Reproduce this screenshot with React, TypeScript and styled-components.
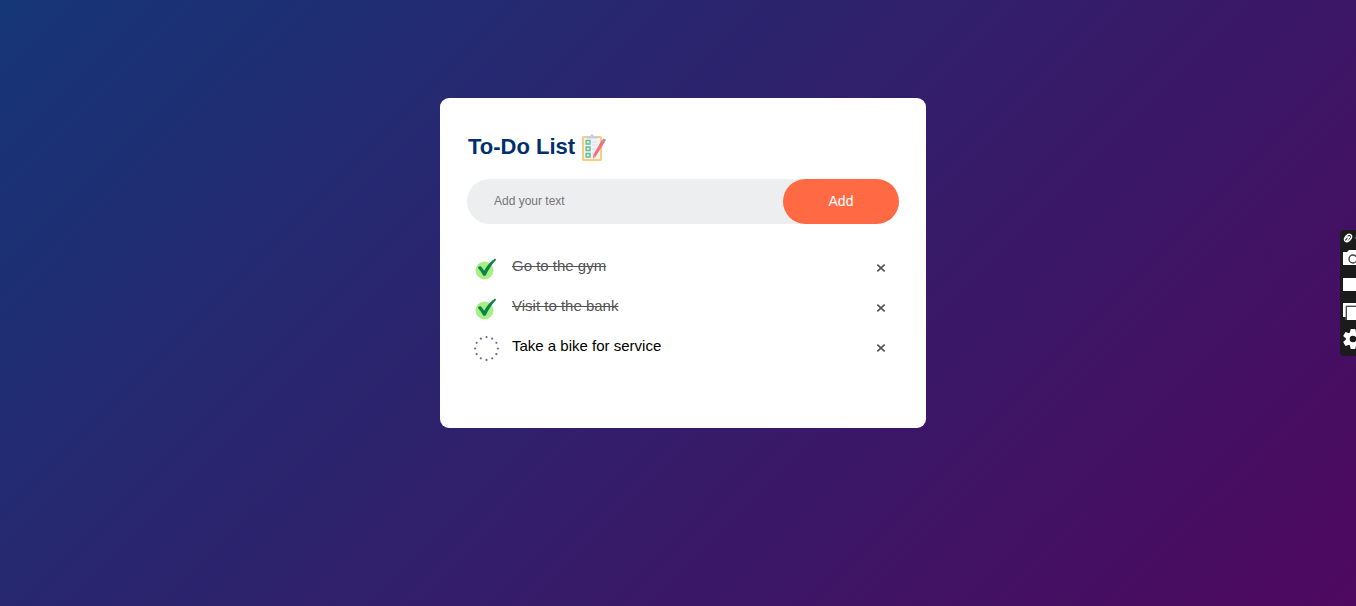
import React, { useState } from "react";
import styled, { createGlobalStyle } from "styled-components";

const GlobalStyle = createGlobalStyle`
  * { box-sizing: border-box; margin: 0; padding: 0; }
  body {
    font-family: "Liberation Sans", Arial, sans-serif;
    background: #2f216a;
  }
`;

const Page = styled.main`
  min-height: 100vh;
  padding: 98px 0 20px 10px;
  overflow: hidden;
  background: linear-gradient(135deg, #153677, #4e085f);
`;

const Card = styled.section`
  width: 100%;
  max-width: 486px;
  margin: 0 auto;
  padding: 36px 27px 60px;
  border-radius: 9px;
  background: #fff;
`;

const Title = styled.h1`
  display: flex;
  align-items: center;
  gap: 5px;
  height: 26px;
  margin-bottom: 19px;
  padding-left: 1px;
  color: #002f70;
  font-size: 22px;
  line-height: 26px;
`;

const AddForm = styled.form`
  display: flex;
  height: 45px;
  margin-bottom: 24px;
  border-radius: 27px;
  background: #edeef0;
`;

const TextBox = styled.input`
  flex: 1;
  min-width: 0;
  padding: 0 9px 2px 27px;
  border: 0;
  outline: 0;
  background: transparent;
  font: 12px "Liberation Sans", Arial, sans-serif;
  &::placeholder { color: #757575; }
`;

const AddButton = styled.button`
  width: 116px;
  padding-bottom: 2px;
  border: 0;
  border-radius: 36px;
  background: #ff6a45;
  color: #fff;
  font: 14px "Liberation Sans", Arial, sans-serif;
  cursor: pointer;
`;

const List = styled.ul`
  list-style: none;
`;

const Row = styled.li`
  display: flex;
  align-items: center;
  height: 40px;
  padding: 0 7px;
`;

const TaskLabel = styled.label`
  display: flex;
  flex: 1;
  gap: 13px;
  cursor: pointer;
`;

const Tick = styled.span`
  display: grid;
  width: 25px;
  height: 25px;
  & > * { grid-area: 1 / 1; width: 25px; height: 25px; }
  & > input { opacity: 0; }
`;

const TaskText = styled.span<{ $done: boolean }>`
  color: ${(p) => (p.$done ? "#555" : "#000")};
  font-size: 15px;
  line-height: 19px;
  text-decoration: ${(p) => (p.$done ? "line-through" : "none")};
`;

const RemoveButton = styled.button`
  display: grid;
  place-items: center;
  width: 22px;
  height: 22px;
  border: 0;
  border-radius: 50%;
  background: transparent;
  cursor: pointer;
`;

const CaptureBar = styled.aside`
  position: fixed;
  top: 230px;
  right: 0;
  width: 16px;
  height: 126px;
  overflow: hidden;
  border-radius: 4px 0 0 4px;
  background: #1b1b1b;
`;

const ClipboardIcon = () => (
  <svg width="28" height="28" viewBox="0 0 28 28" aria-hidden="true">
    <rect x="2" y="3" width="20" height="25" rx="1.5" fill="#f7cc7d" />
    <rect x="4" y="5" width="16" height="21" fill="#f1f1f8" />
    <path d="M7 5.5V3h3q2-4 4 0h3v2.5z" fill="#c9cddb" />
    <g fill="#d9f2e5" stroke="#66c094" strokeWidth="1.5">
      <rect x="6.2" y="7.5" width="3.8" height="3.5" />
      <rect x="6.2" y="14" width="3.8" height="3.5" />
      <rect x="6.2" y="20.5" width="3.8" height="3.5" />
    </g>
    <path d="M12 9h5M12 12h5M12 16h3M12 20h2" stroke="#dddde8" />
    <path d="M21.5 7.5l3 2L16 23l-3 2.5.5-4z" fill="#f56f79" />
    <path d="M13.5 22l2.3 1.2-2.8 2.3z" fill="#d29a82" />
    <path d="M21.8 8l1.2-2q1.5-.7 2.8 1l-1.3 2.6z" fill="#9b94a6" />
  </svg>
);

const CheckedIcon = () => (
  <svg viewBox="0 0 25 25" aria-hidden="true">
    <circle cx="10.5" cy="14.5" r="9" fill="#a9ee84" />
    <path d="M3.8 11.8q1.2-1.8 3.2-1.4 1.7 1.7 3.2 4.4Q14.5 7 21 2.6l1.2 1.2Q16.5 9.500 11.800 19.300q-1.200 1.300-2.600.3Q7 15 3.800 11.800z" fill="#078447" />
  </svg>
);

const DottedIcon = () => (
  <svg viewBox="0 0 25 25" aria-hidden="true">
    {Array.from({ length: 12 }, (_, i) => {
      const a = (i * Math.PI) / 6;
      return <circle key={i} cx={12.5 + 11.4 * Math.cos(a)} cy={12.5 + 11.4 * Math.sin(a)} r="1.1" fill="#706b8c" />;
    })}
  </svg>
);

const CrossIcon = () => (
  <svg width="10" height="10" viewBox="0 0 10 10" aria-hidden="true">
    <path d="M1.3 1.6l7.4 6.800M8.700 1.600L1.300 8.400" stroke="#505054" strokeWidth="1.6" />
  </svg>
);

const CaptureIcons = () => (
  <svg width="32" height="126" viewBox="0 0 32 126" aria-hidden="true">
    <g fill="none" stroke="#fff" strokeWidth="1.5">
      <ellipse cx="8" cy="8" rx="4.2" ry="2.7" transform="rotate(-50 8 8)" />
      <path d="M4 9.500l3-2.500h3M6.500 11l3-4" />
    </g>
    <path d="M14.500 8l2.500-1v2z" fill="#fff" />
    <path d="M3 22h4l2-2h8l2 2h4v13H3z" fill="#fff" />
    <circle cx="13" cy="29" r="4" fill="#fff" stroke="#444" strokeWidth="1.4" />
    <rect x="3" y="48" width="20" height="13" fill="#fff" />
    <path d="M3 73h17v3H6v11H3z" fill="#fff" />
    <path d="M6 90V76h14" fill="none" stroke="#777" />
    <rect x="7" y="77" width="17" height="13" fill="#fff" />
    <g fill="#fff">
      {[0, 60, 120].map((r) => (
        <path key={r} d="M10.700 99h4.600l1 4.500v11l-1 4.500h-4.600l-1-4.500v-11z" transform={`rotate(${r} 13 109)`} />
      ))}
      <circle cx="13" cy="109" r="7.200" />
    </g>
    <circle cx="13" cy="109" r="3.300" fill="#1b1b1b" />
  </svg>
);

const initialTasks = [
  { text: "Go to the gym", done: true },
  { text: "Visit to the bank", done: true },
  { text: "Take a bike for service", done: false },
];

export default function App() {
  const [tasks, setTasks] = useState(initialTasks);
  const [draft, setDraft] = useState("");

  const add = (e: React.FormEvent) => {
    e.preventDefault();
    if (!draft.trim()) return;
    setTasks([...tasks, { text: draft, done: false }]);
    setDraft("");
  };
  const toggle = (index: number) =>
    setTasks(tasks.map((t, i) => (i === index ? { ...t, done: !t.done } : t)));

  return (
    <>
      <GlobalStyle />
      <Page>
        <Card>
          <Title>To-Do List <ClipboardIcon /></Title>
          <AddForm onSubmit={add}>
            <TextBox
              type="text"
              aria-label="Add your text"
              placeholder="Add your text"
              value={draft}
              onChange={(e) => setDraft(e.target.value)}
            />
            <AddButton type="submit">Add</AddButton>
          </AddForm>
          <List>
            {tasks.map((task, i) => (
              <Row key={i}>
                <TaskLabel>
                  <Tick>
                    <input type="checkbox" checked={task.done} onChange={() => toggle(i)} />
                    {task.done ? <CheckedIcon /> : <DottedIcon />}
                  </Tick>
                  <TaskText $done={task.done}>{task.text}</TaskText>
                </TaskLabel>
                <RemoveButton
                  type="button"
                  aria-label={`Remove ${task.text}`}
                  onClick={() => setTasks(tasks.filter((_, n) => n !== i))}
                >
                  <CrossIcon />
                </RemoveButton>
              </Row>
            ))}
          </List>
        </Card>
      </Page>
      <CaptureBar>
        <CaptureIcons />
      </CaptureBar>
    </>
  );
}
